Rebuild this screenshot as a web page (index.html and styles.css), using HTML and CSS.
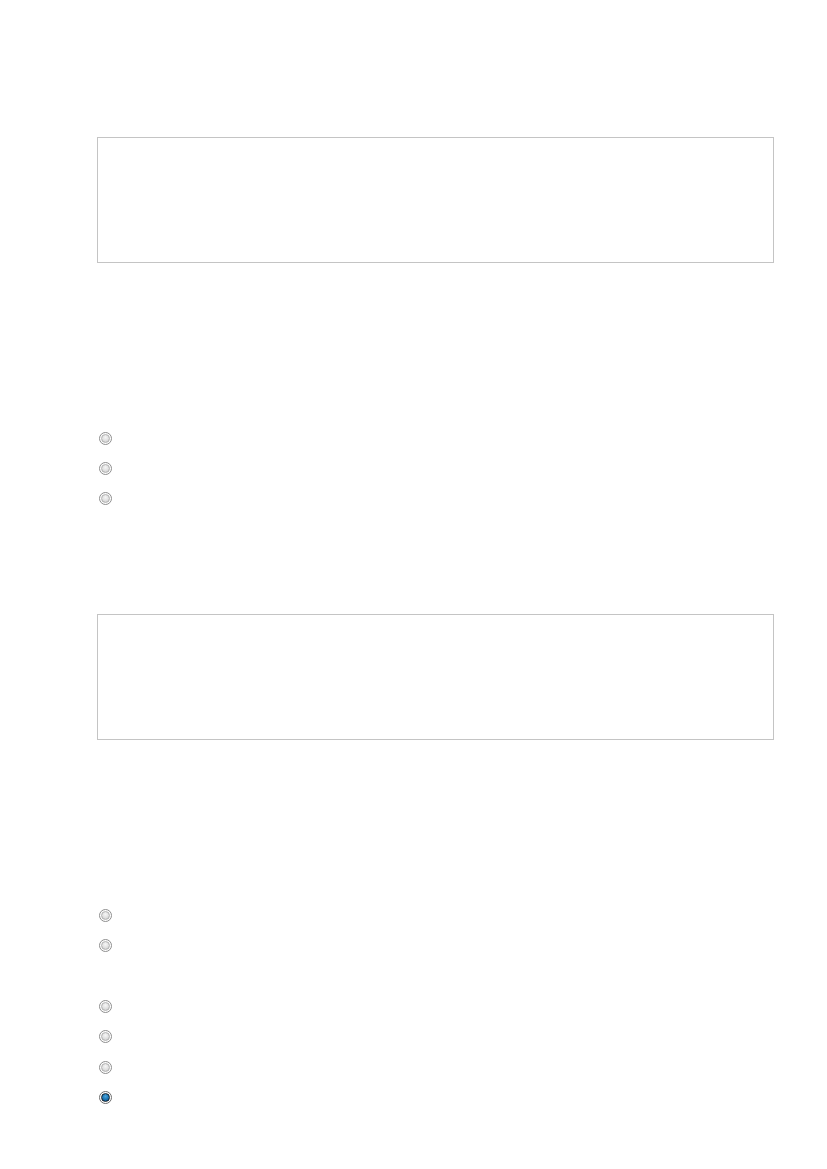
FILE: index.html
```html
<!DOCTYPE html>
<html lang="en">
<head>
    <meta charset="UTF-8">
    <meta name="viewport" content="width=device-width, initial-scale=1.0">
    <title>Form</title>
    <link rel="stylesheet" href="styles.css">
</head>
<body>
    <div class="page">
        <div class="text-box"></div>

        <div class="choices first-group">
            <label class="choice"><span class="radio"></span></label>
            <label class="choice"><span class="radio"></span></label>
            <label class="choice"><span class="radio"></span></label>
        </div>

        <div class="text-box second-box"></div>

        <div class="choices second-group">
            <label class="choice"><span class="radio"></span></label>
            <label class="choice"><span class="radio"></span></label>
            <div class="choice"></div>
            <label class="choice"><span class="radio"></span></label>
            <label class="choice"><span class="radio"></span></label>
            <label class="choice"><span class="radio"></span></label>
            <label class="choice"><span class="radio checked"></span></label>
        </div>
    </div>
</body>
</html>
```

FILE: styles.css
```css
body {
    margin: 0;
    background-color: #fff;
    font-family: "Liberation Sans", Arial, sans-serif;
}

.page {
    padding: 137px 53px 0 97px;
}

.text-box {
    height: 124px;
    border: 1px solid #c4c4c4;
    background-color: #fff;
}

.second-box {
    margin-top: 100px;
}

.first-group {
    margin-top: 160px;
}

.second-group {
    margin-top: 160px;
}

.choices {
    display: flex;
    flex-direction: column;
}

.choice {
    height: 30.4px;
    display: flex;
    align-items: center;
    padding-left: 2px;
}

.radio {
    box-sizing: border-box;
    width: 13px;
    height: 13px;
    border-radius: 50%;
    border: 1px solid #8e8e8e;
    padding: 1px;
    background-color: #fff;
    display: flex;
}

.radio::before {
    content: "";
    flex: 1;
    border-radius: 50%;
    border: 1px solid #b0b0b0;
    background: radial-gradient(circle at 50% 35%, #f6f6f6 0%, #e0e0e0 55%, #c4c4c4 100%);
}

.radio.checked {
    border-color: #6e6e6e;
}

.radio.checked::before {
    border-color: #15202a;
    background: radial-gradient(circle at 50% 35%, #4ba6dc 0%, #1a72b0 55%, #0c4a78 100%);
}
```
